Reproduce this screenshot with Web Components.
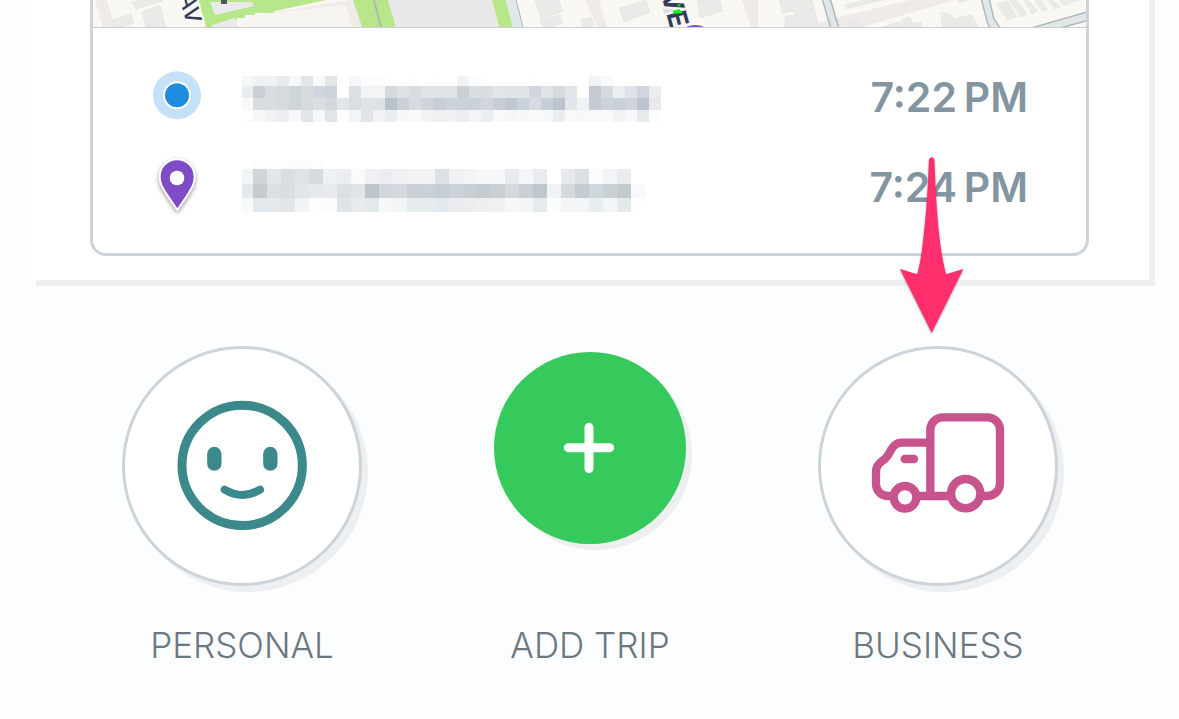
<!DOCTYPE html>
<html lang="en">
<head>
<meta charset="utf-8">
<meta name="viewport" content="width=device-width, initial-scale=1">
<title>Trips</title>
<style>
  body { margin: 0; background: #fcfdff; font-family: Inter, "Liberation Sans", sans-serif; }
</style>
</head>
<body>
<trip-page>
  <trip-card>
    <trip-map slot="map"></trip-map>
    <trip-stop kind="start" time="7:22&#x202F;PM"></trip-stop>
    <trip-stop kind="end" time="7:24&#x202F;PM"></trip-stop>
  </trip-card>
  <trip-action slot="actions" icon="personal">PERSONAL</trip-action>
  <trip-action slot="actions" icon="add">ADD TRIP</trip-action>
  <trip-action slot="actions" icon="business">BUSINESS<pointer-arrow slot="callout"></pointer-arrow></trip-action>
</trip-page>

<script>
class BaseElement extends HTMLElement {
  connectedCallback() {
    if (!this.shadowRoot) this.attachShadow({ mode: "open" }).innerHTML = this.render();
  }
}

customElements.define("trip-page", class extends BaseElement {
  render() {
    return `
      <style>
        :host { display: block; }
        main { padding: 0 30px; }
        nav { display: grid; grid-template-columns: repeat(3, 1fr); padding: 66px 67px 50px 68px; }
      </style>
      <main><slot></slot></main>
      <nav aria-label="Classify trip"><slot name="actions"></slot></nav>`;
  }
});

customElements.define("trip-card", class extends BaseElement {
  render() {
    return `
      <style>
        :host { display: block; background: #fff; padding: 0 60px 24px; box-shadow: 6px 6px 0 #eeeff1, 6px 0 0 #eeeff1; }
        article { border: 3px solid #ccd4da; border-top: 0; border-radius: 0 0 16px 16px; }
        .stops { padding: 24px 58px 21px 60px; }
      </style>
      <article>
        <slot name="map"></slot>
        <div class="stops"><slot></slot></div>
      </article>`;
  }
});

customElements.define("trip-map", class extends BaseElement {
  render() {
    return `
      <style>
        :host { display: block; height: 27px; border-bottom: 1px solid #ccd0d4; background: #f9f8f3; }
        svg { display: block; width: 100%; height: 100%; }
        text { font-family: Inter, sans-serif; fill: #343c58; stroke: #f9f8f6; stroke-width: 4px; paint-order: stroke; }
      </style>
      <svg viewBox="93 0 993 27" preserveAspectRatio="xMidYMid slice" aria-label="Route map" role="img">
        <g fill="#efebe8">
          <path d="M95 0h12l8 27h-12z"/>
          <path d="M270 13 350 0h8l8 27h-96z"/>
          <path d="M585 0h14l8 27h-10z"/>
          <path d="M742 0h16v27h-7z"/>
          <path d="M800 27 910 0h45L862 27z"/>
        </g>
        <g fill="#ebeae9" stroke="#d9d8d4" stroke-width=".5" stroke-dasharray="2 1">
          <path d="M112 20 131 14 134 23 122 27h-7z"/>
          <path d="M132 2 140 0h23l-1 1-26 8z"/>
          <path d="M142 12 160 5 166 27h-20z"/>
          <path d="M535 0h24l4 11-22 8z"/>
          <path d="M540 20 560 15 563 23 552 27h-9z"/>
          <path d="M581 20 591 17 594 25 586 27h-4z"/>
          <path d="M619 8 646 0 650 12 624 22z"/>
          <path d="M697 0h23l3 11-23 7z"/>
          <path d="M779 0h33l7 27h-34v-11l10-1-1-4-12 2z"/>
          <path d="M845 5 865 0h18l-37 9z"/>
          <path d="M848 21 857 18 860 27h-11z"/>
          <path d="M901 20 910 17 913 23 922 22 922 27h-19z"/>
          <path d="M882 27 899 22 901 27z"/>
          <path d="M941 12 951 15 954 19 971 15 979 27h-37z"/>
          <path d="M957 0h10l-7 3z"/>
        </g>
        <path fill="#f7f5f1" d="M240 19 272 13 346 5 352 27H245z"/>
        <g fill="#b8e68b">
          <path d="M198 0h128l-51 11-2 2h-18v2h-10v3h-8v2l-24 7h-7z"/>
          <path d="M353 0h35l8 27h-34z"/>
          <path d="M492 0h14l7 27h-14z"/>
        </g>
        <path fill="#ebeaea" d="M210 2h42l2 4-39 9z"/>
        <path fill="#ebeaea" d="M212 25 235 18 238 27h-26z"/>
        <path fill="#55585a" d="M221 0h6v4h-6z"/>
        <path fill="none" stroke="#b0bdae" stroke-width="2" d="m374 0 3 12 4 15"/>
        <path fill="#e9e8e8" d="M388 0h104l7 27H396z"/>
        <path fill="#e1e8e9" d="M506 0h10l7 27h-10z"/>
        <path fill="none" stroke="#aeb5b6" d="m516 0 7 27"/>
        <g fill="#ebebe6">
          <path d="m995 4 13-4 9 17-9 4z"/>
          <path d="m1009 0 8 0 11 14-7 4z"/>
          <path d="m1023 0 6 0 9 11-6 4z"/>
          <path d="m1034 0 7 0 7 10-6 2z"/>
          <path d="m1047 0 6 0 8 7-6 3z"/>
          <path d="m1059 0h22l-17 6z"/>
        </g>
        <g fill="#e0e7e8" stroke="#b0b8b8" stroke-width="1.5">
          <path d="m822-2 9 31h8L830-2z"/>
          <path d="m981-2 6 23 3 8h11l-7-10-5-21z"/>
          <path d="m1028 29 62-18v9l-34 9z"/>
        </g>
        <path fill="#dce2e2" d="m662 7 12 0 5 20h-10z"/>
        <text font-size="22" font-weight="500" transform="translate(179 -4) rotate(75)">AV</text>
        <text font-size="27" font-weight="700" transform="translate(661 -6) rotate(75)">VE</text>
        <path fill="#12f41d" d="m673 11 6-2 4 4-10 1zM677 5l4-1-2 3z"/>
        <circle cx="695" cy="46" r="22" fill="#7d4cc6" stroke="#fff" stroke-width="2"/>
      </svg>`;
  }
});

/* Obscured address: a coarse mosaic of pale cells, one string of colours per line. */
const MOSAICS = {
  start: {
    first: 11, cell: 12, lines: [
      [6, 10, "f6f7f9 f0f1f2 f0f1f2 e8ebee f6f7f9 e2e6e9 f8f9fb e2e6e9 ffffff f6f7f9 fbfcfd fbfcfc ffffff ffffff fefefe ffffff fefefe ffffff f1f3f5 fbfcfc ffffff ffffff ffffff ffffff fefefe ffffff ffffff ffffff ffffff f1f2f5 f9fafc"],
      [16, 12, "ebeef0 c9d0d8 d8dde1 d5dade ced6d9 d6dbdf d0d5df cdd3db ffffff dce0e5 f3f4f6 f3f4f6 d5dadf dde2e5 d7dde0 dfe3e6 e0e3e6 dfe3e6 c8d0d5 d9dee1 d9dee1 e3e6e8 e0e4e7 e1e4e7 d2d5df e0e4e7 d5dadf e2e6ea ffffff c3cad3 d5dbdf ebeff1 dfe3e7 d0d5df ebeef0"],
      [28, 12, "f9f9fa d8dde1 d8dde1 d5dade ced6d9 d6dbdf dadfe3 d3d9de e2e6ea d9dee3 e0e4e8 dde2e6 b9c2cc cbd1d9 d6dce0 d0d5dd c6cdd4 cdd3db c9d1d9 cad1d8 d1d6df c7ced6 bfc7d0 cad2d9 d8dbe1 c8d0d6 bbc3ce e2e5e9 f0f1f2 c4cbd4 ccd4da cad0d8 cfd4dd bcc5ce e6eaed"],
      [40, 12, "fdfdfd f6f7f8 f0f1f2 ebedf0 f6f8fa e3e6e9 f7f8fa e1e5e8 fdfdfe f2f4f6 e1e5e8 f0f2f3 e9ecf0 f7f8fa f8f9fb f2f3f5 eff0f2 f1f1f3 ebedf0 f2f4f6 eaeef1 f8f9fb f4f6f7 f7f8f8 f8f9f9 f7f8fa e9edf0 f9f9f9 f9f8f8 f8f9fa f8f9fb f0f2f3 f8f9fc e8ebee fcfdfd"]
    ]
  },
  end: {
    first: 11, cell: 14, lines: [
      [0, 9, "ffffff fcfdfd fcfdfd fbfcfc fbfcfc fcfdfd"],
      [9, 15, "f2f4f5 ced6dc e3e6e9 d8dee2 dfe3e6 d5dbdf eff2f4 eaeef1 f8fafb eff1f2 ebedf0 f0f1f2 f2f3f4 f2f3f4 dbe1e5 f0f1f2 f3f4f5 f7f8f9 f7f8f9 e7ebee f4f6f8 e8ecef ffffff e6eaed dbe0e4 fbfcfc f3f4f6 e9edf0"],
      [24, 14, "e5e9ec c5cbd0 dce0e3 d9dee1 e2e6e9 e5e9ec e7ebed dce0e4 e0e4e8 bbc5cc d2d6de d4d8df c9d1d7 cad1d7 c6ced4 cbd3d9 c7cfd5 c3cbd1 c8d0d6 d3d9dd c9d0d7 bdc7ce f1f3f5 d3d9dc c3cbd3 cfd6dc c9d1d7 c4cbcf f7f9fb"],
      [38, 14, "f7f9fa e3e8ec e5e9ec e1e6ea f0f4f5 fcfdfd fbfcfc dfe4e8 e7ebee e3e8eb f7f8fa f3f5f6 e6ebee e6ebed e4e9ed eaecf0 ededf0 efeff1 f0f0f2 f6f7f9 f2f4f6 e5eaed fbfcfc f3f5f7 f3f5f7 e8edf0 f3f5f7 e4e9ec fefefe"]
    ]
  }
};

function mosaic({ first, cell, lines }) {
  return lines.map(([y, h, colours]) => colours.split(" ").map((c, i) => {
    const x = i ? first + (i - 1) * cell : 0;
    return `<rect x="${x}" y="${y}" width="${i ? cell : first}" height="${h}" fill="#${c}"/>`;
  }).join("")).join("");
}

const MARKERS = {
  start: `<svg class="marker" viewBox="39 21 144 180" aria-hidden="true">
    <circle cx="111" cy="106" r="72" fill="#c5e1f8"/>
    <circle cx="111" cy="106" r="42" fill="#fff"/>
    <circle cx="111" cy="106" r="36" fill="#1f8ce0"/></svg>`,
  end: `<svg class="marker pin" viewBox="39 291 144 180" aria-hidden="true">
    <path d="M111 298c-29 0-52 23-52 52 0 23 10 36 25 59l28 41 28-41c14-23 24-36 24-59 0-29-24-52-53-52z" fill="#7d4cc6" stroke="#fff" stroke-width="6" stroke-linejoin="round"/>
    <circle cx="111" cy="354" r="22" fill="#fff"/></svg>`
};

customElements.define("trip-stop", class extends BaseElement {
  render() {
    const kind = this.getAttribute("kind");
    return `
      <style>
        :host { display: flex; align-items: center; height: 90px; }
        .marker { flex: none; width: 48px; height: 60px; overflow: visible; }
        .pin { filter: drop-shadow(0 2px 2px rgb(0 0 0 / .4)); }
        .address { flex: none; width: 420px; height: 54px; margin-left: 41px; }
        time { margin-left: auto; font-size: 41px; line-height: 50px; font-weight: 600; color: #8395a1; white-space: nowrap; }
      </style>
      ${MARKERS[kind]}
      <svg class="address" viewBox="0 0 420 54" shape-rendering="crispEdges" role="img" aria-label="Hidden address">${mosaic(MOSAICS[kind])}</svg>
      <time>${this.getAttribute("time")}</time>`;
  }
});

const ICONS = {
  personal: `<svg viewBox="45 42 702 702" aria-hidden="true" fill="none" stroke="#3c898b" stroke-linecap="round">
    <circle cx="396.500" cy="391" r="180.500" stroke-width="27"/>
    <path d="M313 357v29M481 357v29" stroke-width="43"/>
    <path d="M344 464q53 32 106 0" stroke-width="24"/></svg>`,
  add: `<svg viewBox="42 36 576 576" aria-hidden="true">
    <path d="M327 262v124M265 323h124" stroke="#fff" stroke-width="27" stroke-linecap="round"/></svg>`,
  business: `<svg viewBox="33 42 702 702" aria-hidden="true" fill="none" stroke="#c8548d" stroke-width="25">
    <path d="M361 483V285a38 38 0 0 1 38-38h133a38 38 0 0 1 38 38v160a38 38 0 0 1-38 38H515"/>
    <path d="M361 323H275c-16 0-24 8-31 20-7 15-13 26-26 34-13 9-20 17-20 33v36c0 23 17 37 36 37h12M323 483h96"/>
    <circle cx="285" cy="487" r="34"/>
    <circle cx="467" cy="476" r="44"/>
    <path d="M284 372h28" stroke-linecap="round"/></svg>`
};

customElements.define("trip-action", class extends BaseElement {
  render() {
    const icon = this.getAttribute("icon");
    return `
      <style>
        :host { display: block; position: relative; }
        button { display: grid; grid-template-rows: 240px 44px; row-gap: 37px; justify-items: center; width: 100%;
          margin: 0; padding: 0; border: 0; background: none; font: inherit; color: #6c7880; cursor: pointer; }
        .disc { box-sizing: border-box; width: 240px; height: 240px; border: 3px solid #ccd4da; border-radius: 50%;
          background: #fff; box-shadow: 6px 6px 0 #eeeff1; }
        .disc.add { width: 192px; height: 192px; margin-top: 6px; border: 0; background: #36c95c; }
        svg { display: block; width: 100%; height: 100%; }
        .label { font-size: 35px; line-height: 44px; font-weight: 300; white-space: nowrap; }
      </style>
      <button type="button">
        <span class="disc ${icon}">${ICONS[icon]}</span>
        <span class="label"><slot></slot></span>
      </button>
      <slot name="callout"></slot>`;
  }
});

customElements.define("pointer-arrow", class extends BaseElement {
  render() {
    return `
      <style>
        :host { display: block; position: absolute; bottom: calc(100% + 11px); left: calc(50% - 38px); width: 64px; height: 178px; pointer-events: none; }
        svg { display: block; width: 100%; height: 100%; overflow: visible; filter: drop-shadow(0 1px 1px rgb(0 0 0 / .4)); }
      </style>
      <svg viewBox="150 290 192 534" aria-hidden="true">
        <path fill="#ff2e6c" d="M237 299q1-8 8-8t8 8c4 90 7 170 19 261q6 44 16 82l52-16-95 191-95-191 52 16q10-38 15-82c12-91 16-171 20-261z"/>
      </svg>`;
  }
});
</script>
</body>
</html>
